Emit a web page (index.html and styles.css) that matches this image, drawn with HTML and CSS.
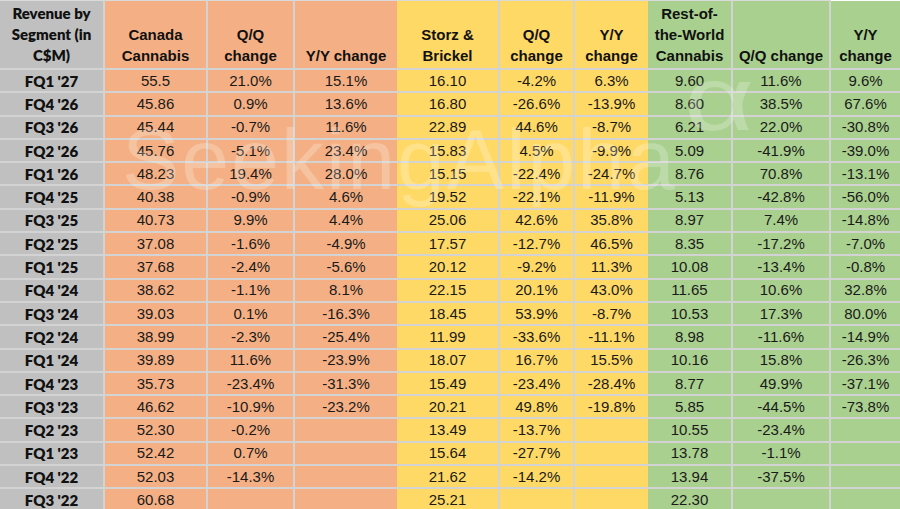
FILE: index.html
```html
<!DOCTYPE html>
<html>
<head>
<meta charset="utf-8">
<link rel="stylesheet" href="styles.css">
</head>
<body>
<div class="sheet">
<table class="grid">
<colgroup>
<col style="width:105px"><col style="width:103px"><col style="width:87px"><col style="width:102px">
<col style="width:103px"><col style="width:75px"><col style="width:73px">
<col style="width:85px"><col style="width:98px"><col style="width:69px">
</colgroup>
<thead>
<tr class="head">
<th class="lab">Revenue by<br>Segment (in<br>C$M)</th>
<th class="o">Canada<br>Cannabis</th>
<th class="o">Q/Q<br>change</th>
<th class="o end">Y/Y change</th>
<th class="y">Storz &amp;<br>Brickel</th>
<th class="y">Q/Q<br>change</th>
<th class="y end">Y/Y<br>change</th>
<th class="g">Rest-of-<br>the-World<br>Cannabis</th>
<th class="g">Q/Q change</th>
<th class="g end last">Y/Y<br>change</th>
</tr>
</thead>
<tbody>
<tr><td class="lab">FQ1 '27</td><td class="o">55.5</td><td class="o">21.0%</td><td class="o end">15.1%</td><td class="y">16.10</td><td class="y">-4.2%</td><td class="y end">6.3%</td><td class="g">9.60</td><td class="g">11.6%</td><td class="g end">9.6%</td></tr>
<tr><td class="lab">FQ4 '26</td><td class="o">45.86</td><td class="o">0.9%</td><td class="o end">13.6%</td><td class="y">16.80</td><td class="y">-26.6%</td><td class="y end">-13.9%</td><td class="g">8.60</td><td class="g">38.5%</td><td class="g end">67.6%</td></tr>
<tr><td class="lab">FQ3 '26</td><td class="o">45.44</td><td class="o">-0.7%</td><td class="o end">11.6%</td><td class="y">22.89</td><td class="y">44.6%</td><td class="y end">-8.7%</td><td class="g">6.21</td><td class="g">22.0%</td><td class="g end">-30.8%</td></tr>
<tr><td class="lab">FQ2 '26</td><td class="o">45.76</td><td class="o">-5.1%</td><td class="o end">23.4%</td><td class="y">15.83</td><td class="y">4.5%</td><td class="y end">-9.9%</td><td class="g">5.09</td><td class="g">-41.9%</td><td class="g end">-39.0%</td></tr>
<tr><td class="lab">FQ1 '26</td><td class="o">48.23</td><td class="o">19.4%</td><td class="o end">28.0%</td><td class="y">15.15</td><td class="y">-22.4%</td><td class="y end">-24.7%</td><td class="g">8.76</td><td class="g">70.8%</td><td class="g end">-13.1%</td></tr>
<tr><td class="lab">FQ4 '25</td><td class="o">40.38</td><td class="o">-0.9%</td><td class="o end">4.6%</td><td class="y">19.52</td><td class="y">-22.1%</td><td class="y end">-11.9%</td><td class="g">5.13</td><td class="g">-42.8%</td><td class="g end">-56.0%</td></tr>
<tr><td class="lab">FQ3 '25</td><td class="o">40.73</td><td class="o">9.9%</td><td class="o end">4.4%</td><td class="y">25.06</td><td class="y">42.6%</td><td class="y end">35.8%</td><td class="g">8.97</td><td class="g">7.4%</td><td class="g end">-14.8%</td></tr>
<tr><td class="lab">FQ2 '25</td><td class="o">37.08</td><td class="o">-1.6%</td><td class="o end">-4.9%</td><td class="y">17.57</td><td class="y">-12.7%</td><td class="y end">46.5%</td><td class="g">8.35</td><td class="g">-17.2%</td><td class="g end">-7.0%</td></tr>
<tr><td class="lab">FQ1 '25</td><td class="o">37.68</td><td class="o">-2.4%</td><td class="o end">-5.6%</td><td class="y">20.12</td><td class="y">-9.2%</td><td class="y end">11.3%</td><td class="g">10.08</td><td class="g">-13.4%</td><td class="g end">-0.8%</td></tr>
<tr><td class="lab">FQ4 '24</td><td class="o">38.62</td><td class="o">-1.1%</td><td class="o end">8.1%</td><td class="y">22.15</td><td class="y">20.1%</td><td class="y end">43.0%</td><td class="g">11.65</td><td class="g">10.6%</td><td class="g end">32.8%</td></tr>
<tr><td class="lab">FQ3 '24</td><td class="o">39.03</td><td class="o">0.1%</td><td class="o end">-16.3%</td><td class="y">18.45</td><td class="y">53.9%</td><td class="y end">-8.7%</td><td class="g">10.53</td><td class="g">17.3%</td><td class="g end">80.0%</td></tr>
<tr><td class="lab">FQ2 '24</td><td class="o">38.99</td><td class="o">-2.3%</td><td class="o end">-25.4%</td><td class="y">11.99</td><td class="y">-33.6%</td><td class="y end">-11.1%</td><td class="g">8.98</td><td class="g">-11.6%</td><td class="g end">-14.9%</td></tr>
<tr><td class="lab">FQ1 '24</td><td class="o">39.89</td><td class="o">11.6%</td><td class="o end">-23.9%</td><td class="y">18.07</td><td class="y">16.7%</td><td class="y end">15.5%</td><td class="g">10.16</td><td class="g">15.8%</td><td class="g end">-26.3%</td></tr>
<tr><td class="lab">FQ4 '23</td><td class="o">35.73</td><td class="o">-23.4%</td><td class="o end">-31.3%</td><td class="y">15.49</td><td class="y">-23.4%</td><td class="y end">-28.4%</td><td class="g">8.77</td><td class="g">49.9%</td><td class="g end">-37.1%</td></tr>
<tr><td class="lab">FQ3 '23</td><td class="o">46.62</td><td class="o">-10.9%</td><td class="o end">-23.2%</td><td class="y">20.21</td><td class="y">49.8%</td><td class="y end">-19.8%</td><td class="g">5.85</td><td class="g">-44.5%</td><td class="g end">-73.8%</td></tr>
<tr><td class="lab">FQ2 '23</td><td class="o">52.30</td><td class="o">-0.2%</td><td class="o end"></td><td class="y">13.49</td><td class="y">-13.7%</td><td class="y end"></td><td class="g">10.55</td><td class="g">-23.4%</td><td class="g end"></td></tr>
<tr><td class="lab">FQ1 '23</td><td class="o">52.42</td><td class="o">0.7%</td><td class="o end"></td><td class="y">15.64</td><td class="y">-27.7%</td><td class="y end"></td><td class="g">13.78</td><td class="g">-1.1%</td><td class="g end"></td></tr>
<tr><td class="lab">FQ4 '22</td><td class="o">52.03</td><td class="o">-14.3%</td><td class="o end"></td><td class="y">21.62</td><td class="y">-14.2%</td><td class="y end"></td><td class="g">13.94</td><td class="g">-37.5%</td><td class="g end"></td></tr>
<tr><td class="lab">FQ3 '22</td><td class="o">60.68</td><td class="o"></td><td class="o end"></td><td class="y">25.21</td><td class="y"></td><td class="y end"></td><td class="g">22.30</td><td class="g"></td><td class="g end"></td></tr>
</tbody>
</table>
<div class="mark" aria-hidden="true">SeekingAlpha</div>
<div class="mark-alpha" aria-hidden="true">α</div>
</div>
</body>
</html>
```

FILE: styles.css
```css
html, body {
  margin: 0;
  padding: 0;
  background: #ffffff;
}

.sheet {
  position: relative;
  width: 900px;
  height: 509px;
  overflow: hidden;
}

.grid {
  table-layout: fixed;
  width: 900px;
  border-collapse: separate;
  border-spacing: 0;
  font-family: "Liberation Sans", Arial, sans-serif;
  font-size: 15px;
  color: #1a1a1a;
}

.grid th,
.grid td {
  box-sizing: border-box;
  padding: 0;
  text-align: center;
  white-space: nowrap;
  border-right: 2px solid #d3d3d3;
  border-bottom: 2px solid #d3d3d3;
}

.grid th.end,
.grid td.end {
  border-right: none;
}

.head {
  height: 70px;
}

.head th {
  vertical-align: bottom;
  font-weight: bold;
  line-height: 21px;
  padding-bottom: 2px;
  color: #111;
  border-top: 1px solid #dadada;
}

.head th.last {
  border-top-color: #ffffff;
}

.grid tbody tr {
  height: 23.3px;
}

.grid td {
  line-height: 18px;
  vertical-align: middle;
}

.grid .lab {
  background: #c0c0c0;
  font-family: Lato, "Open Sans", sans-serif;
  font-weight: 800;
  font-size: 15px;
  color: #111;
}

.grid .o {
  background: #f4b084;
}

.grid .y {
  background: #ffd966;
}

.grid .g {
  background: #a9d08e;
}

.mark,
.mark-alpha {
  position: absolute;
  font-family: "Liberation Sans", Arial, sans-serif;
  line-height: 1;
  color: rgba(255, 255, 255, 0.24);
  pointer-events: none;
  white-space: nowrap;
}

.mark {
  left: 122px;
  top: 116px;
  font-size: 86px;
  letter-spacing: 2px;
}

.mark-alpha {
  left: 684px;
  top: 54px;
  font-size: 90px;
  transform: scaleX(1.35);
  transform-origin: left top;
}
```
